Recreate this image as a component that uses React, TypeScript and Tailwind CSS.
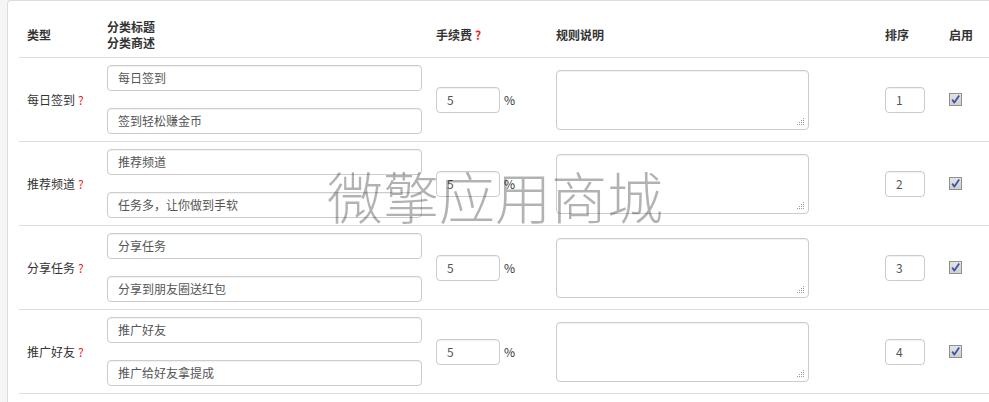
import React from "react";

type Row = {
  label: string;
  title: string;
  desc: string;
  fee: string;
  sort: string;
};

const rows: Row[] = [
  { label: "每日签到", title: "每日签到", desc: "签到轻松赚金币", fee: "5", sort: "1" },
  { label: "推荐频道", title: "推荐频道", desc: "任务多，让你做到手软", fee: "5", sort: "2" },
  { label: "分享任务", title: "分享任务", desc: "分享到朋友圈送红包", fee: "5", sort: "3" },
  { label: "推广好友", title: "推广好友", desc: "推广给好友拿提成", fee: "5", sort: "4" },
];

const cols = "grid grid-cols-[80px_329px_120px_329px_64px_1fr]";
const font = { fontFamily: '"Noto Sans CJK SC", "Microsoft YaHei", sans-serif' };

function TextBox({ value, w }: { value: string; w: string }) {
  return (
    <div
      className={`${w} h-[26px] border border-[#cccccc] rounded-[4px] bg-white px-[10px] flex items-center text-[12px] text-[#555555] shadow-[inset_0_1px_1px_rgba(0,0,0,0.06)]`}
    >
      {value}
    </div>
  );
}

function Grip() {
  return (
    <svg width="8" height="8" viewBox="0 0 8 8" className="absolute right-[3px] bottom-[3px]">
      <g fill="#9a9a9a">
        <rect x="6" y="0" width="1" height="1" />
        <rect x="4" y="2" width="1" height="1" />
        <rect x="6" y="2" width="1" height="1" />
        <rect x="2" y="4" width="1" height="1" />
        <rect x="4" y="4" width="1" height="1" />
        <rect x="6" y="4" width="1" height="1" />
        <rect x="0" y="6" width="1" height="1" />
        <rect x="2" y="6" width="1" height="1" />
        <rect x="4" y="6" width="1" height="1" />
        <rect x="6" y="6" width="1" height="1" />
      </g>
    </svg>
  );
}

function Check() {
  return (
    <span className="relative block w-[13px] h-[13px] border border-[#8f8f8f] bg-[linear-gradient(#e4e4e4,#cfcfcf)]">
      <svg width="11" height="11" viewBox="0 0 11 11" className="absolute left-0 top-0">
        <path d="M2.2 5.6 L4.4 8.6 L9.2 1.4" fill="none" stroke="#3b55a8" strokeWidth="1.8" strokeLinejoin="round" />
      </svg>
    </span>
  );
}

function Ask() {
  return <span className="text-[#ee2222] ml-[3px]">?</span>;
}

export default function App() {
  return (
    <div className="w-[989px] h-[402px] overflow-hidden bg-[#f5f5f5] pl-[7px]" style={font}>
      <div className="relative h-[420px] w-[1000px] bg-white border-t border-l border-[#dddddd] rounded-tl-[4px] pt-[12px] pl-[11px] text-[12px] text-[#333333]">
        {/* header */}
        <div className={`${cols} h-[45px] border-b border-[#dddddd] font-bold items-center`}>
          <div className="px-[8px]">类型</div>
          <div className="px-[8px] leading-[16px]">
            <div>分类标题</div>
            <div>分类商述</div>
          </div>
          <div className="px-[8px]">
            手续费
            <Ask />
          </div>
          <div className="px-[8px]">规则说明</div>
          <div className="px-[8px]">排序</div>
          <div className="px-[8px]">启用</div>
        </div>

        {rows.map((r) => (
          <div key={r.label} className={`${cols} h-[84px] border-b border-[#dddddd] items-center`}>
            <div className="px-[8px]">
              {r.label}
              <Ask />
            </div>
            <div className="px-[8px] flex flex-col gap-[17px]">
              <TextBox value={r.title} w="w-[315px]" />
              <TextBox value={r.desc} w="w-[315px]" />
            </div>
            <div className="px-[8px] flex items-center gap-[4px]">
              <TextBox value={r.fee} w="w-[64px]" />
              <span>%</span>
            </div>
            <div className="px-[8px]">
              <div className="relative w-[253px] h-[60px] border border-[#cccccc] rounded-[4px] bg-white shadow-[inset_0_1px_1px_rgba(0,0,0,0.06)]">
                <Grip />
              </div>
            </div>
            <div className="px-[8px]">
              <TextBox value={r.sort} w="w-[40px]" />
            </div>
            <div className="px-[8px]">
              <Check />
            </div>
          </div>
        ))}

        {/* watermark */}
        <div className="absolute left-[319px] top-[166px] text-[56px] font-light leading-none text-[rgba(0,0,0,0.3)] pointer-events-none whitespace-nowrap">
          微擎应用商城
        </div>
      </div>
    </div>
  );
}
